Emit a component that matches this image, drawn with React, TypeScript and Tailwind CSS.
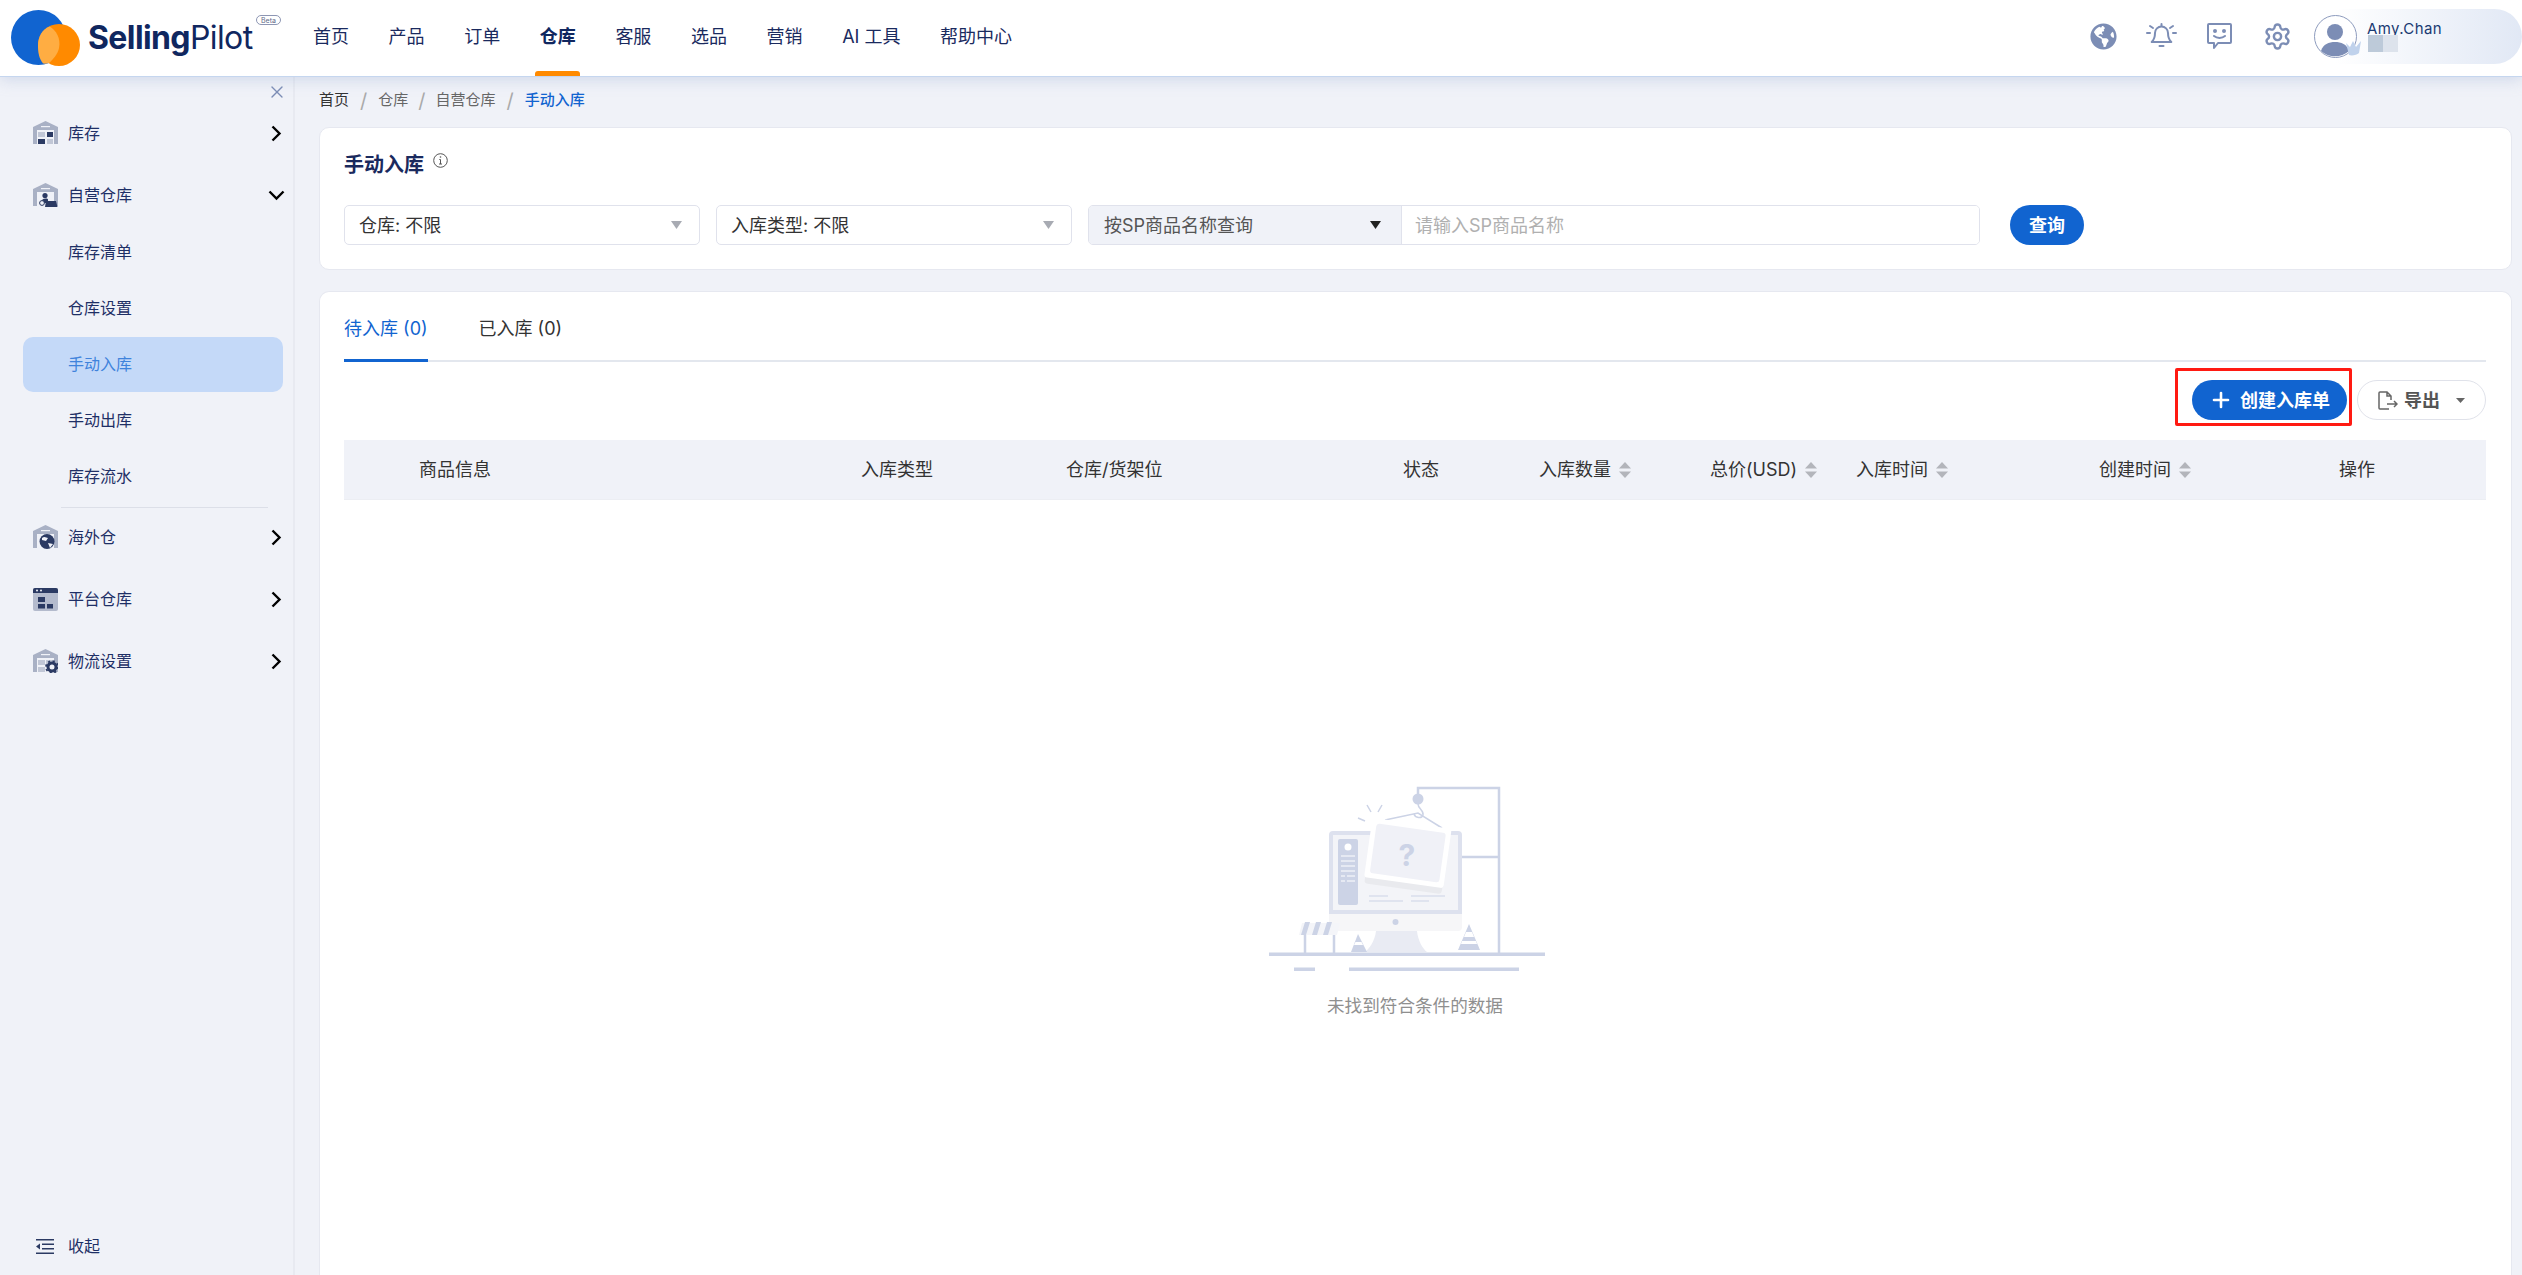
import React from "react";
import { Settings, Plus, X } from "lucide-react";
import { FaGlobeAmericas } from "react-icons/fa";

const ICON = "#7c8db5";
const DARK = "#2b3a63";
const LIGHT = "#a9b1c5";

function Roof({ children }: { children?: React.ReactNode }) {
  return (
    <svg width="25" height="24" viewBox="0 0 25 24" className="shrink-0">
      <path d="M0 23V6L12.5 0 25 6v17h-4V9H4v14z" fill={LIGHT} />
      <rect x="8" y="5" width="9" height="1.2" fill="#f0f2f8" />
      {children}
    </svg>
  );
}

const IconStock = () => (
  <Roof>
    <rect x="5" y="11" width="7" height="5" fill="#c1c7d6" />
    <rect x="14" y="11" width="6" height="5" fill={DARK} />
    <rect x="5" y="18" width="7" height="5" fill={DARK} />
    <rect x="14" y="18" width="6" height="5" fill="#c1c7d6" />
  </Roof>
);
const IconOwn = () => (
  <Roof>
    <circle cx="12" cy="12.5" r="2.6" fill={DARK} />
    <path d="M8 20c0-3 2-4.5 4.5-4.5S15 16 15 17v3z" fill={DARK} />
    <circle cx="9" cy="20" r="2.4" fill="#f0f2f8" stroke={DARK} strokeWidth="1" />
    <path d="M13 18h10l1.500 6H12z" fill={DARK} />
  </Roof>
);
const IconOverseas = () => (
  <Roof>
    <circle cx="14" cy="16.500" r="7.500" fill={DARK} />
    <path d="M9 13c3-2 4 0 6 0l-2 3-4-1zM15 18l5 1-3 4z" fill="#f0f2f8" />
  </Roof>
);
const IconPlatform = () => (
  <svg width="25" height="23" viewBox="0 0 25 23" className="shrink-0">
    <rect width="25" height="23" rx="2" fill="#b4bbcd" />
    <path d="M2 0h21a2 2 0 0 1 2 2v3H0V2a2 2 0 0 1 2-2z" fill={DARK} />
    <circle cx="4" cy="2.500" r="1" fill="#f0f2f8" />
    <circle cx="8" cy="2.500" r="1" fill="#f0f2f8" />
    <rect x="5" y="9" width="7" height="5" fill={DARK} />
    <rect x="5" y="16" width="7" height="4.500" fill={DARK} />
    <rect x="14" y="16" width="6" height="4.500" fill={DARK} />
  </svg>
);
const IconLogistics = () => (
  <Roof>
    <rect x="5" y="11" width="7" height="5" fill="#c1c7d6" />
    <rect x="5" y="18" width="7" height="5" fill="#c1c7d6" />
    <rect x="13" y="11" width="7" height="5" fill="#c1c7d6" />
    <circle cx="19" cy="18" r="4" fill="#f0f2f8" stroke={DARK} strokeWidth="3" />
    <circle cx="19" cy="18" r="6" fill="none" stroke={DARK} strokeWidth="1.800" strokeDasharray="2.200 2.500" />
  </Roof>
);

const ChevRight = () => (
  <svg width="11" height="17" viewBox="0 0 11 17" className="shrink-0">
    <path d="M1.500 1.500l7 7-7 7" fill="none" stroke="#000" strokeWidth="2.400" />
  </svg>
);
const ChevDown = () => (
  <svg width="17" height="11" viewBox="0 0 17 11" className="shrink-0">
    <path d="M1.500 1.500l7 7 7-7" fill="none" stroke="#000" strokeWidth="2.400" />
  </svg>
);
const Caret = ({ color = "#a8abb3" }: { color?: string }) => (
  <svg width="11" height="8" viewBox="0 0 11 8" className="shrink-0">
    <path d="M0 0h11L5.500 8z" fill={color} />
  </svg>
);
const Sort = () => (
  <svg width="12" height="16" viewBox="0 0 12 16" className="shrink-0">
    <path d="M6 0l6 6.500H0z" fill="#b3b5bb" />
    <path d="M0 9.500h12L6 16z" fill="#b3b5bb" />
  </svg>
);

function Logo() {
  return (
    <div className="relative flex w-[290px] items-center pl-[11px]">
      <svg width="70" height="56" viewBox="0 0 70 56" className="shrink-0">
        <circle cx="27.500" cy="27.500" r="27.500" fill="#1164d0" />
        <circle cx="48" cy="35" r="21" fill="#ff8a00" />
        <path d="M38.500 16.400C45 20 50 28 48 38c-1.200 6-5.500 11-10 15-2 .6-4 .8-6 .5-4-5-5-11-5-18 0-9 4-16 11.500-19.100z" fill="#ffad42" />
      </svg>
      <div className="ml-[7px] flex items-baseline text-[32px] leading-none tracking-[-0.6px] text-[#10275f]">
        <span className="font-bold">Selling</span>
        <span className="font-normal">Pilot</span>
      </div>
      <span className="absolute left-[256px] top-[5px] flex h-[10px] w-[25px] items-center justify-center rounded-full border border-[#8d96b3] text-[7px] leading-none text-[#5f6a8a]">
        Beta
      </span>
    </div>
  );
}

const navItems = ["首页", "产品", "订单", "仓库", "客服", "选品", "营销", "AI 工具", "帮助中心"];

function Header() {
  return (
    <header className="relative z-10 flex h-[77px] shrink-0 items-center border-b border-[#c5d6ef] bg-white shadow-[0_3px_14px_rgba(150,170,210,0.35)]">
      <Logo />
      <nav className="ml-[23px] flex h-full gap-[39.6px] text-[18px] text-[#1a2a5e]">
        {navItems.map((n) => (
          <div key={n} className="relative flex h-full items-center pb-[4px]">
            <span className={n === "仓库" ? "font-bold text-[#10275f]" : ""}>{n}</span>
            {n === "仓库" && (
              <span className="absolute bottom-0 left-[-5px] h-[5px] w-[45px] rounded-t-[3px] bg-[#ff8a00]" />
            )}
          </div>
        ))}
      </nav>
      <div className="ml-auto flex items-center pb-[4px]">
        <div className="flex w-[58px] justify-center">
          <FaGlobeAmericas size={27} color={ICON} />
        </div>
        <div className="flex w-[58px] justify-center">
          <svg width="31" height="30" viewBox="0 0 31 30" fill="none" stroke={ICON} strokeWidth="2" strokeLinecap="round">
            <path d="M15.500 5.500A6.500 6.500 0 0 0 9 12c0 5-1.800 7.500-3.300 9h19.600C23.800 19.500 22 17 22 12a6.500 6.500 0 0 0-6.500-6.500z" strokeLinejoin="round" />
            <path d="M13.500 25h4M15.500 3v2M1 12h3M27 12h3M4 5l3 2M27 5l-3 2" />
          </svg>
        </div>
        <div className="flex w-[58px] justify-center">
          <svg width="25" height="27" viewBox="0 0 25 27" fill="none" stroke={ICON} strokeWidth="2" strokeLinejoin="round">
            <path d="M2 1h21a1 1 0 0 1 1 1v17a1 1 0 0 1-1 1H11l-4 5v-5H2a1 1 0 0 1-1-1V2a1 1 0 0 1 1-1z" />
            <path d="M7 13c3 2.500 8 2.500 11 0" strokeLinecap="round" />
            <circle cx="8" cy="8" r="1" fill={ICON} />
            <circle cx="17" cy="8" r="1" fill={ICON} />
          </svg>
        </div>
        <div className="flex w-[58px] justify-center">
          <Settings size={29} color={ICON} strokeWidth={2} />
        </div>
        <div className="relative ml-[8px] flex h-[55px] w-[208px] items-center rounded-l-full rounded-r-full bg-gradient-to-r from-white from-10% to-[#e1e8f5]">
          <svg width="43" height="43" viewBox="0 0 43 43" className="shrink-0">
            <circle cx="21.500" cy="21.500" r="21" fill="#fff" stroke="#8d9bbd" strokeWidth="1" />
            <circle cx="21" cy="17" r="8" fill={ICON} />
            <path d="M7 36c2-7 8-9 14-9s12 2 14 9a21 21 0 0 1-28 0z" fill={ICON} />
          </svg>
          <svg width="18" height="20" viewBox="0 0 18 20" className="absolute left-[30px] top-[29px]">
            <path d="M2 5l4 4 3-6 3 6 5-6-2 12c-2 2-7 3-10 2z" fill="#c0d2ec" />
          </svg>
          <div className="ml-[10px] flex flex-col">
            <span className="mt-[-14px] text-[15px] leading-[20px] tracking-[0.4px] text-[#1a3a72]">Amy.Chan</span>
            <div className="absolute left-[54px] top-[26px] flex">
              <span className="h-[17px] w-[15px] bg-[#bdcad9]" />
              <span className="h-[17px] w-[15px] bg-[#dde3ec]" />
            </div>
          </div>
        </div>
      </div>
    </header>
  );
}

function TopRow({ icon, label, open }: { icon: React.ReactNode; label: string; open?: boolean }) {
  return (
    <div className="flex h-[62px] items-center pl-[33px] pr-[8px] text-[16px] text-[#1e2f66]">
      <span className="flex w-[35px] shrink-0">{icon}</span>
      <span>{label}</span>
      <span className="ml-auto flex w-[17px] justify-center">{open ? <ChevDown /> : <ChevRight />}</span>
    </div>
  );
}

function SubRow({ label, active }: { label: string; active?: boolean }) {
  return (
    <div className="flex h-[56px] items-center pl-[23px]">
      <div
        className={
          "flex h-[55px] w-[260px] items-center rounded-[10px] pl-[45px] text-[16px] " +
          (active ? "bg-[#c4d9f8] text-[#3f83dc]" : "text-[#1e2f66]")
        }
      >
        {label}
      </div>
    </div>
  );
}

function Sidebar() {
  return (
    <aside className="flex w-[295px] shrink-0 flex-col border-r-2 border-[#e8eaf1] bg-[#f0f2f8]">
      <div className="flex h-[25px] items-end justify-end pr-[6px]">
        <X size={20} color={ICON} strokeWidth={1.6} />
      </div>
      <TopRow icon={<IconStock />} label="库存" />
      <div className="-mb-[2px]">
        <TopRow icon={<IconOwn />} label="自营仓库" open />
      </div>
      <SubRow label="库存清单" />
      <SubRow label="仓库设置" />
      <SubRow label="手动入库" active />
      <SubRow label="手动出库" />
      <SubRow label="库存流水" />
      <div className="ml-[61px] mt-[3px] h-px w-[207px] bg-[#dcdfe8]" />
      <div className="-mt-[2px]">
        <TopRow icon={<IconOverseas />} label="海外仓" />
      </div>
      <TopRow icon={<IconPlatform />} label="平台仓库" />
      <TopRow icon={<IconLogistics />} label="物流设置" />
      <div className="mt-auto flex h-[58px] items-center pl-[36px] text-[16px] text-[#1e2f66]">
        <svg width="18" height="15" viewBox="0 0 18 15" className="mr-[14px] shrink-0">
          <rect width="18" height="1.500" y="0" fill={DARK} />
          <rect x="6" width="12" height="1.500" y="4.500" fill={DARK} />
          <rect x="6" width="12" height="1.500" y="9" fill={DARK} />
          <rect width="18" height="1.500" y="13.500" fill={DARK} />
          <path d="M0 7.500L4 4.500v6z" fill={DARK} />
        </svg>
        收起
      </div>
    </aside>
  );
}

function Slash({ className }: { className: string }) {
  return <span className={"text-[20px] leading-none text-[#aaa] " + className}>/</span>;
}

function Breadcrumb() {
  return (
    <div className="mb-[3px] flex h-[47px] items-center text-[15px]">
      <span className="text-[#333]">首页</span>
      <Slash className="mx-[11px]" />
      <span className="text-[#666]">仓库</span>
      <Slash className="mx-[10px]" />
      <span className="text-[#666]">自营仓库</span>
      <Slash className="mx-[11px]" />
      <span className="font-medium text-[#1164d0]">手动入库</span>
    </div>
  );
}

function Select({ label }: { label: string }) {
  return (
    <div className="flex h-[40px] w-[356px] items-center justify-between rounded-[5px] border border-[#e0e2ec] bg-white pl-[14px] pr-[17px] text-[18px] text-[#333]">
      <span>{label}</span>
      <Caret />
    </div>
  );
}

function FilterCard() {
  return (
    <section className="h-[143px] rounded-t-[10px] rounded-b-[10px] border border-[#e6e8f0] bg-white px-[24px] pt-[25px]">
      <div className="flex h-[24px] items-center">
        <h1 className="text-[20px] font-bold leading-[24px] text-[#1a2a5e]">手动入库</h1>
        <svg width="15" height="15" viewBox="0 0 15 15" className="ml-[9px] mt-[-10px]" fill="none" stroke="#555">
          <circle cx="7.500" cy="7.500" r="6.800" />
          <path d="M7.500 6.500v4.500M6 11h3M6.300 6.500h1.200" />
          <circle cx="7.500" cy="4" r=".8" fill="#555" stroke="none" />
        </svg>
      </div>
      <div className="mt-[28px] flex items-center gap-[16px]">
        <Select label="仓库: 不限" />
        <Select label="入库类型: 不限" />
        <div className="flex h-[40px] w-[892px] overflow-hidden rounded-[5px] border border-[#e0e2ec] text-[18px]">
          <div className="flex w-[313px] shrink-0 items-center justify-between border-r border-[#e0e2ec] bg-[#f0f2f8] pl-[15px] pr-[20px] text-[#555]">
            <span>按SP商品名称查询</span>
            <Caret color="#222" />
          </div>
          <div className="flex flex-1 items-center bg-white pl-[13px] text-[#b0b0b0]">请输入SP商品名称</div>
        </div>
        <button className="ml-[14px] flex h-[40px] w-[74px] items-center justify-center rounded-full bg-[#1164d0] text-[18px] font-bold text-white">
          查询
        </button>
      </div>
    </section>
  );
}

function Tabs() {
  return (
    <div className="flex h-[70px] gap-[51px] shadow-[inset_0_-2px_0_#e3e7ee]">
      <div className="flex h-[70px] items-start border-b-[3px] border-[#1164d0] pt-[25px] text-[18px] leading-[24px] text-[#1164d0]">
        待入库 (0)
      </div>
      <div className="flex h-[70px] items-start pt-[25px] text-[18px] leading-[24px] text-[#333]">已入库 (0)</div>
    </div>
  );
}

function Toolbar() {
  return (
    <div className="mt-[6px] flex items-start justify-end gap-[5px]">
      <div className="rounded-[2px] border-[3px] border-[#ff1a12] pb-[3px] pl-[14px] pr-[2px] pt-[9px]">
        <button className="flex h-[40px] w-[155px] items-center justify-center gap-[7px] rounded-full bg-[#1164d0] text-[18px] font-bold text-white">
          <Plus size={24} strokeWidth={2.6} />
          创建入库单
        </button>
      </div>
      <button className="mt-[12px] flex h-[40px] w-[129px] items-center justify-center gap-[6px] rounded-full border border-[#e0e2ea] bg-white text-[18px] font-bold text-[#555]">
        <svg width="20" height="19" viewBox="0 0 20 19" fill="none" stroke="#666" strokeWidth="1.500" className="shrink-0">
          <path d="M11 18H2a1 1 0 0 1-1-1V2a1 1 0 0 1 1-1h7l4 4v4M9 1v4h4M9 13h10M16 10l3 3-3 3" />
        </svg>
        导出
        <span className="ml-[10px]">
          <svg width="9" height="5" viewBox="0 0 9 5">
            <path d="M0 0h9L4.500 5z" fill="#666" />
          </svg>
        </span>
      </button>
    </div>
  );
}

const columns: { label: string; sort?: boolean }[] = [
  { label: "商品信息" },
  { label: "入库类型" },
  { label: "仓库/货架位" },
  { label: "状态" },
  { label: "入库数量", sort: true },
  { label: "总价(USD)", sort: true },
  { label: "入库时间", sort: true },
  { label: "创建时间", sort: true },
  { label: "操作" },
];

function TableHead() {
  return (
    <div className="mt-[14px] grid h-[60px] grid-cols-[442px_205px_337px_136px_171px_146px_243px_240px_1fr] items-center border-b border-[#eceef3] bg-[#f0f2f8] pl-[75px] text-[18px] text-[#333]">
      {columns.map((c) => (
        <div key={c.label} className="flex items-center gap-[8px]">
          <span>{c.label}</span>
          {c.sort && <Sort />}
        </div>
      ))}
    </div>
  );
}

function EmptyArt() {
  const s = "#ccd3e6";
  return (
    <svg width="340" height="230" viewBox="5 0 340 230">
      <path d="M178 36V28h81v165M222 97h37" fill="none" stroke={s} strokeWidth="2.500" />
      <circle cx="178" cy="39" r="5.500" fill={s} />
      <path d="M178 44c0 5 6 6 5 11-1 4-8 3-9-1M145 60l33-7 24 15" fill="none" stroke={s} strokeWidth="1.500" />
      <path d="M118 58l7 3M127 45l4 7M142 45l-4 7" stroke={s} strokeWidth="1.500" />
      <path d="M89 154V75a4 4 0 0 1 4-4h125a4 4 0 0 1 4 4v79z" fill="#dde1ee" />
      <rect x="93" y="75" width="125" height="75" fill="#f3f4f8" />
      <rect x="98" y="79" width="20" height="66" rx="2" fill={s} />
      <circle cx="108" cy="87" r="3.500" fill="#fff" />
      <path d="M101 96h14M101 101h14M101 106h14M101 111h14M101 116h4M107 116h8M101 121h4M107 121h8" stroke="#fff" strokeWidth="1" />
      <path d="M129 136h19M129 141h34M171 136h34M171 141h18" stroke={s} strokeWidth="1" />
      <path d="M89 154h133v13a4 4 0 0 1-4 4H93a4 4 0 0 1-4-4z" fill="#f6f6f8" />
      <circle cx="155.500" cy="162" r="3" fill={s} />
      <path d="M136 171h41c1 10 6 18 10 21h-62c4-3 10-11 11-21z" fill="#e9ebf3" />
      <g transform="rotate(8 168 92)">
        <rect x="129" y="63" width="78" height="60" rx="3" fill="#000" opacity="0.04" transform="translate(0 6)" />
        <rect x="128" y="63" width="80" height="60" rx="3" fill="#fff" />
        <rect x="133" y="68" width="70" height="50" rx="3" fill="#f0f1f7" />
      </g>
      <text x="167" y="106" textAnchor="middle" fontSize="30" fontWeight="700" fill={s} fontFamily="Inter, sans-serif">?</text>
      <path d="M62 163l-3 12h38l3-12z" fill="#f4f5f9" />
      <path d="M65 162l-4 13h5l4-13zM76 162l-4 13h5l4-13zM87 162l-4 13h5l4-13z" fill={s} />
      <path d="M65 175v18M94 175v18" stroke={s} strokeWidth="2.500" />
      <path d="M118 174l-7 18h16z" fill={s} />
      <path d="M115.500 182h6l1.500 3h-9z" fill="#fff" />
      <path d="M229 164l-11 26h22z" fill={s} />
      <path d="M226 172h6l2 5h-10zM222 181h14l1 3h-16z" fill="#fff" />
      <rect x="29" y="192.500" width="276" height="3.500" fill={s} />
      <rect x="54" y="207.500" width="21" height="3.500" fill={s} />
      <rect x="109" y="207.500" width="170" height="3.500" fill={s} />
    </svg>
  );
}

function TableCard() {
  return (
    <section className="flex-1 rounded-t-[10px] border border-b-0 border-[#e6e8f0] bg-white pl-[24px] pr-[25px]">
      <Tabs />
      <Toolbar />
      <TableHead />
      <div className="mt-[260px] flex flex-col items-center">
        <EmptyArt />
        <div className="text-[17.6px] leading-[32px] text-[#8f8f8f]">未找到符合条件的数据</div>
      </div>
    </section>
  );
}

export default function App() {
  return (
    <div className="flex h-[1275px] w-[2522px] flex-col overflow-hidden bg-[#f0f2f8] font-[Inter,'Noto_Sans_CJK_SC',sans-serif]">
      <Header />
      <div className="flex min-h-0 flex-1">
        <Sidebar />
        <main className="flex min-w-0 flex-1 flex-col gap-[21px] pl-[24px] pr-[10px]">
          <div className="-mb-[21px]">
            <Breadcrumb />
          </div>
          <FilterCard />
          <TableCard />
        </main>
      </div>
    </div>
  );
}
